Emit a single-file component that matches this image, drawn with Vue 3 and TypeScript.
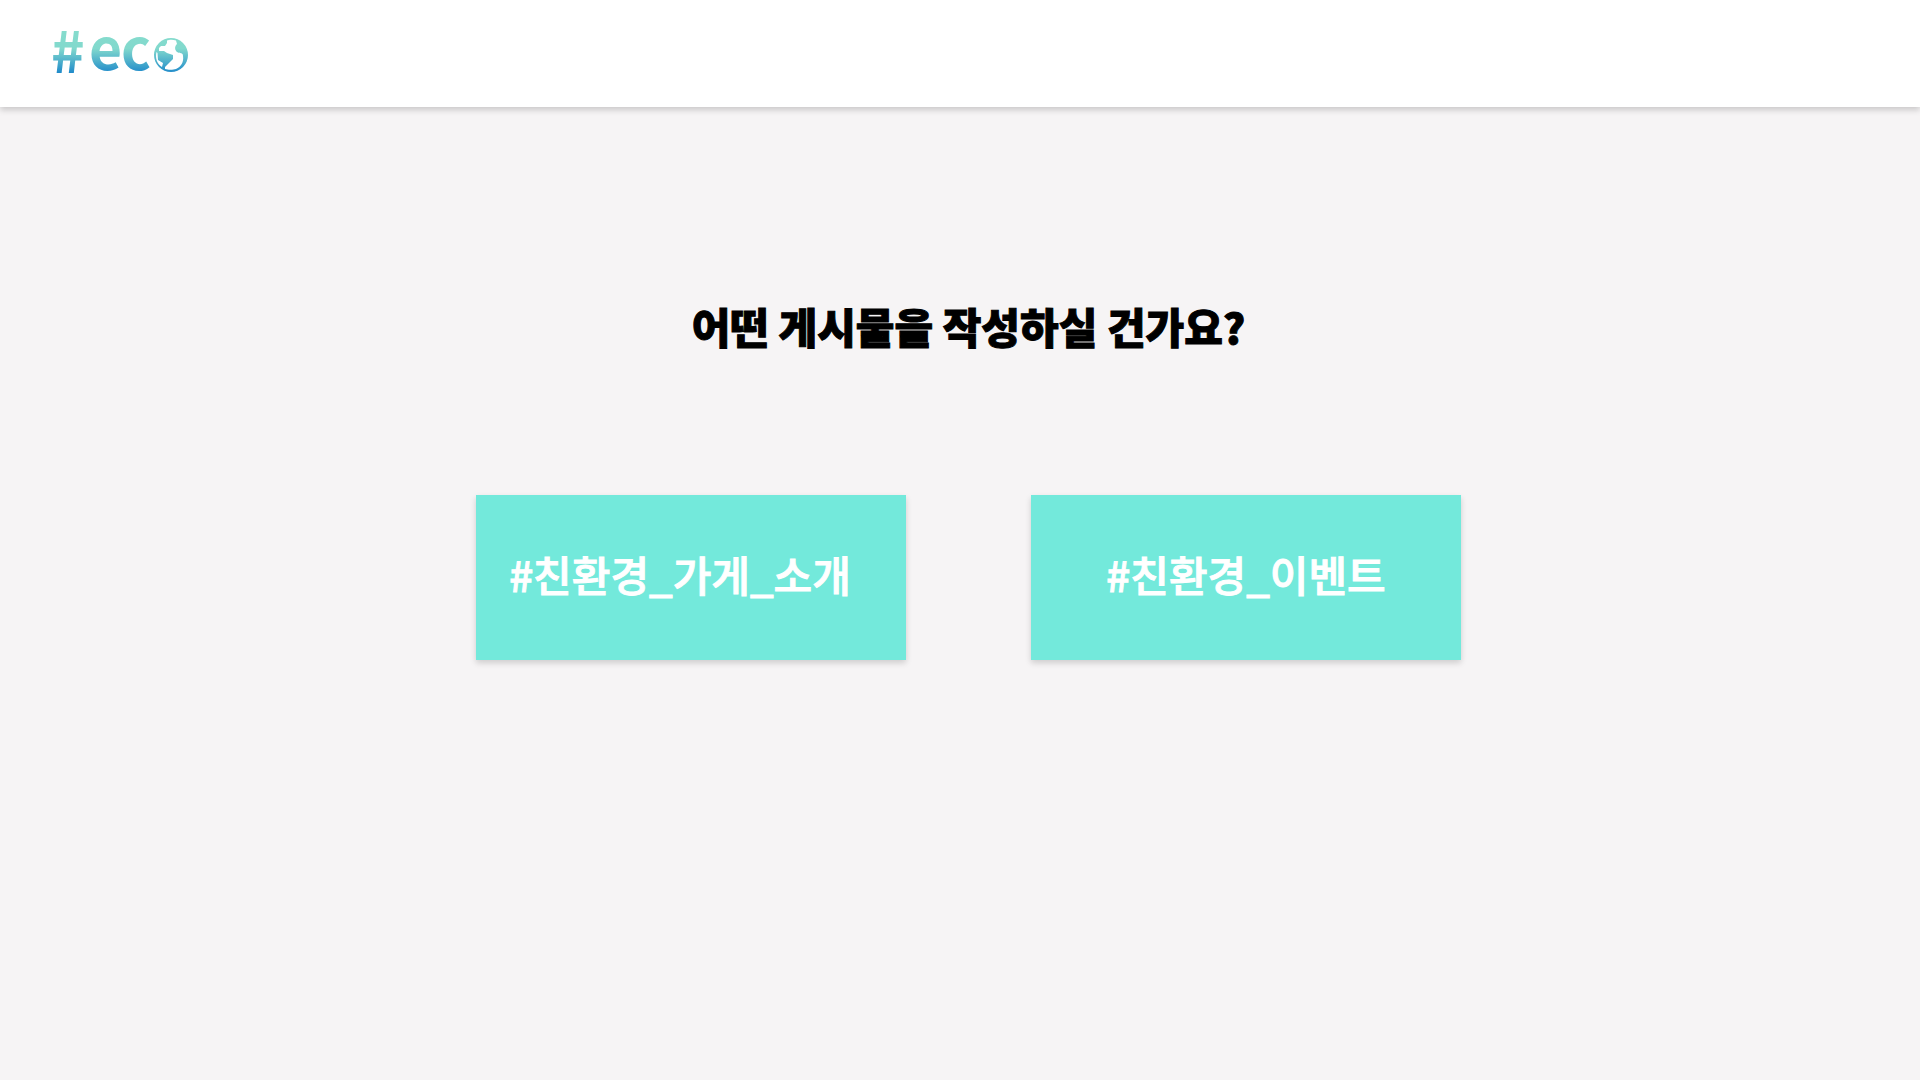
<script setup lang="ts">
interface PostType {
  id: string
  label: string
}

const postTypes: PostType[] = [
  { id: 'shop', label: '#친환경_가게_소개' },
  { id: 'event', label: '#친환경_이벤트' },
]
</script>

<template>
  <div class="page">
    <header class="header">
      <a class="logo" href="#" aria-label="#eco">
        <svg width="150" height="107" viewBox="-4 0 150 107">
          <defs>
            <linearGradient id="eco-fade" gradientUnits="userSpaceOnUse" x1="0" y1="30" x2="0" y2="74">
              <stop offset="0" stop-color="#86dccd" />
              <stop offset="0.42" stop-color="#82d9cd" />
              <stop offset="1" stop-color="#1b87ca" />
            </linearGradient>
            <linearGradient id="globe-fade" gradientUnits="userSpaceOnUse" x1="0" y1="4" x2="0" y2="48">
              <stop offset="0" stop-color="#86dccd" />
              <stop offset="0.42" stop-color="#82d9cd" />
              <stop offset="1" stop-color="#1b87ca" />
            </linearGradient>
          </defs>
          <text class="mark" x="-1" y="73" fill="url(#eco-fade)">#</text>
          <text class="word" x="37 69" y="70" fill="url(#eco-fade)">ec</text>
          <path
            transform="translate(1 26)"
            fill="url(#globe-fade)"
            fill-rule="evenodd"
            d="M118 12a17 17 0 1 0 0 34a17 17 0 1 0 0-34zM114 14.5C116 13.7 120 13.5 123 14.5L124 18C121 21 122 24 124 26C127 28 130 26 130 30C131 36 128 41 123 43C120 44 115 44 112 43L112 41L120 33L120 29L114 27L111 25L106 25L106 22L108 20L112 20L114 17zM104.500 27L105 34L110 37L109 41C104 38 102 32 103.500 26z"
          />
        </svg>
      </a>
    </header>

    <main class="content">
      <h1 class="title">어떤 게시물을 작성하실 건가요?</h1>
      <div class="choices">
        <button
          v-for="type in postTypes"
          :key="type.id"
          type="button"
          class="choice"
          :class="`choice-${type.id}`"
        >
          {{ type.label }}
        </button>
      </div>
    </main>
  </div>
</template>

<style>
body {
  margin: 0;
  background: #f6f4f5;
}
</style>

<style scoped>
.page {
  min-height: 100vh;
  background: #f6f4f5;
  font-family: "Noto Sans CJK KR", sans-serif;
}

.header {
  display: flex;
  align-items: center;
  box-sizing: border-box;
  height: 107px;
  padding: 0 48px;
  background: #fff;
  box-shadow: 0 3px 6px rgba(0, 0, 0, 0.18);
}

.logo {
  display: block;
}

.logo svg {
  display: block;
}

.mark,
.word {
  font-size: 57px;
  font-weight: 700;
}

.content {
  display: flex;
  flex-direction: column;
  align-items: center;
  padding: 189px 0 64px 17px;
}

.title {
  margin: 0;
  font-size: 42px;
  font-weight: 900;
  line-height: 60px;
  color: #000;
  -webkit-text-stroke: 1px #000;
}

.choices {
  display: flex;
  flex-wrap: wrap;
  justify-content: center;
  gap: 125px;
  margin-top: 139px;
}

.choice {
  width: 430px;
  height: 165px;
  padding: 0 0 8px;
  border: 0;
  background: #73e9db;
  box-shadow: 0 3px 6px rgba(0, 0, 0, 0.16);
  color: #fff;
  font-family: inherit;
  font-size: 42px;
  font-weight: 500;
  line-height: 60px;
  -webkit-text-stroke: 1px #fff;
  cursor: pointer;
}

.choice-shop {
  padding-right: 22px;
}
</style>
